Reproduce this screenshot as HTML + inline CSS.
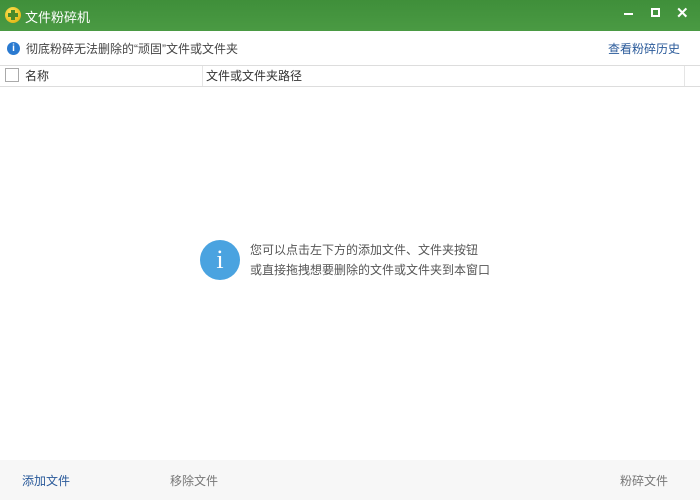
<!DOCTYPE html>
<html><head><meta charset="utf-8"><style>
*{margin:0;padding:0;box-sizing:border-box}
body{width:700px;height:500px;overflow:hidden;background:#fff;font-family:"Liberation Sans","Noto Sans CJK SC",sans-serif;font-size:12px;color:#333;position:relative}
.title{position:absolute;left:0;top:0;width:700px;height:31px;background:linear-gradient(#3f8f3a,#4a9a43);color:#fff}
.abs{position:absolute;white-space:nowrap}
</style></head><body>
<div class="title">
 <div class="abs" style="left:5px;top:7px;width:16px;height:16px;border-radius:50%;background:radial-gradient(circle at 40% 35%,#ffe65a,#d9a800);"></div>
 <div class="abs" style="left:11px;top:10px;width:4px;height:10px;background:#4a8a2a"></div>
 <div class="abs" style="left:8px;top:13px;width:10px;height:4px;background:#4a8a2a"></div>
 <div class="abs" style="left:25px;top:7px;font-size:13px">文件粉碎机</div>
 <div class="abs" style="left:624px;top:13px;width:9px;height:2px;background:#fff"></div>
 <div class="abs" style="left:651px;top:8px;width:9px;height:9px;border:2px solid #fff"></div>
 <div class="abs" style="left:676px;top:4px;font-size:15px;font-weight:bold">✕</div>
</div>
<div class="abs" style="left:7px;top:42px;width:13px;height:13px;border-radius:50%;background:#2a7ad0;color:#fff;font-size:10px;font-weight:bold;text-align:center;line-height:13px">i</div>
<div class="abs" style="left:26px;top:40px;color:#444">彻底粉碎无法删除的“顽固”文件或文件夹</div>
<div class="abs" style="left:608px;top:40px;color:#2a5a9a">查看粉碎历史</div>
<div class="abs" style="left:0;top:65px;width:700px;height:22px;border-top:1px solid #ddd;border-bottom:1px solid #ddd;background:#fff"></div>
<div class="abs" style="left:5px;top:68px;width:14px;height:14px;border:1px solid #aaa;background:#fff"></div>
<div class="abs" style="left:25px;top:67px">名称</div>
<div class="abs" style="left:202px;top:66px;width:1px;height:20px;background:#e5e5e5"></div>
<div class="abs" style="left:206px;top:67px">文件或文件夹路径</div>
<div class="abs" style="left:684px;top:66px;width:1px;height:20px;background:#e5e5e5"></div>
<div class="abs" style="left:200px;top:240px;width:40px;height:40px;border-radius:50%;background:#4aa3e0;color:#fff;font-size:26px;text-align:center;line-height:40px;font-family:'Liberation Serif',serif">i</div>
<div class="abs" style="left:250px;top:240px;color:#555;line-height:20px">您可以点击左下方的添加文件、文件夹按钮<br>或直接拖拽想要删除的文件或文件夹到本窗口</div>
<div class="abs" style="left:0;top:460px;width:700px;height:40px;background:#f7f7f7"></div>
<div class="abs" style="left:22px;top:472px;color:#2a5a9a">添加文件</div>
<div class="abs" style="left:170px;top:472px;color:#777">移除文件</div>
<div class="abs" style="left:620px;top:472px;color:#777">粉碎文件</div>
</body></html>
